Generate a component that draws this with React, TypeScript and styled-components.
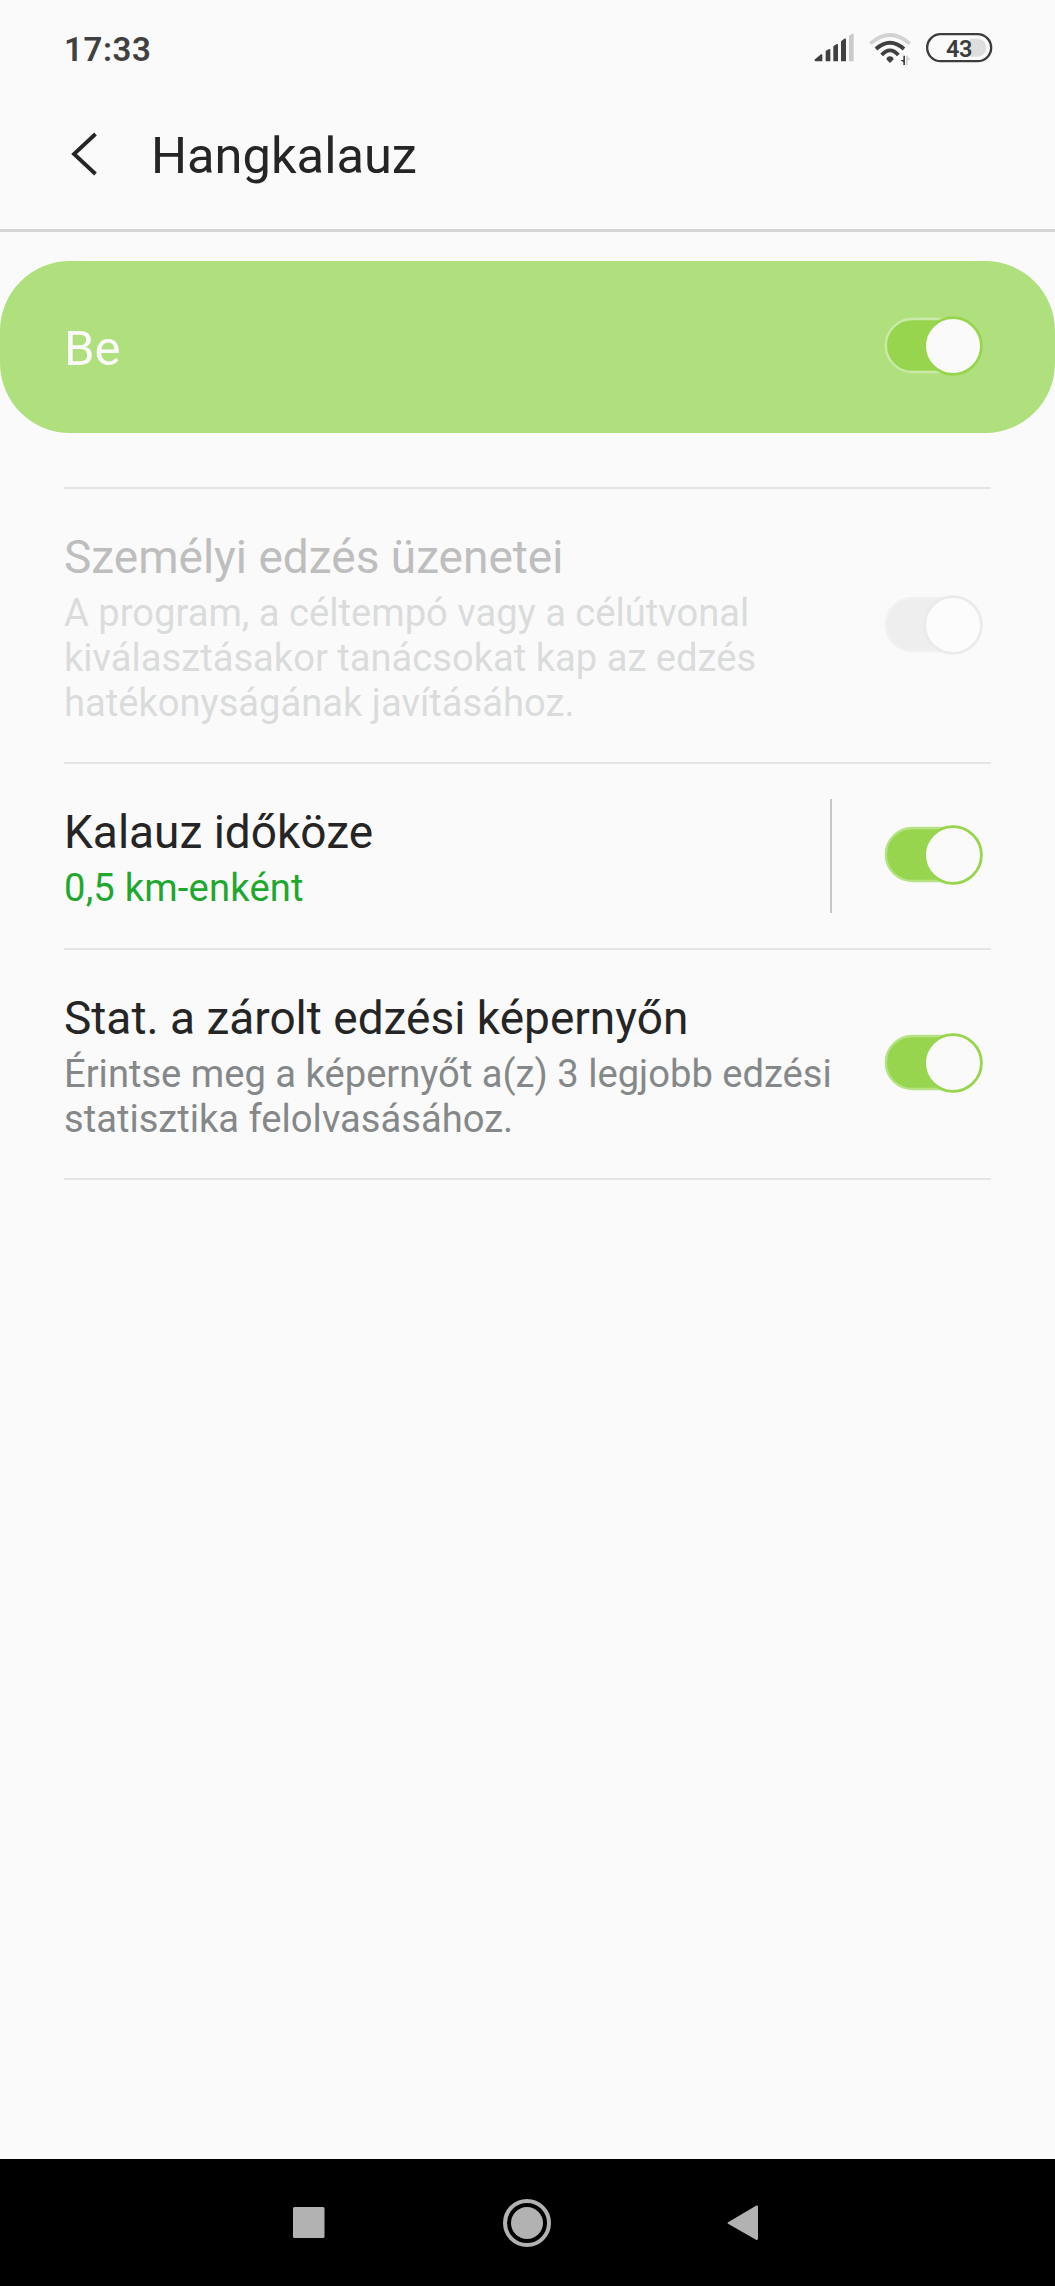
import React from "react";
import styled, { createGlobalStyle } from "styled-components";

const GlobalStyle = createGlobalStyle`
  body {
    margin: 0;
    background: #fafafa;
    font-family: Roboto, "Noto Sans", sans-serif;
    color: #252525;
  }
  * { box-sizing: border-box; }
`;

const Screen = styled.div`
  display: flex;
  flex-direction: column;
  width: 1055px;
  height: 2286px;
  overflow: hidden;
  background: #fafafa;
`;

const StatusBar = styled.div`
  display: flex;
  align-items: center;
  justify-content: space-between;
  height: 100px;
  padding: 0 62px 0 64px;
`;

const Clock = styled.div`
  font-size: 33px;
  font-weight: 600;
  line-height: 40px;
  letter-spacing: 0.6px;
  color: #404040;
`;

const StatusIcons = styled.svg`
  display: block;
  width: 220px;
  height: 80px;
  margin-right: -17px;
`;

const BatteryText = styled.text`
  font-family: Roboto, sans-serif;
  font-size: 23.5px;
  font-weight: 600;
  letter-spacing: -0.4px;
  fill: #3c3c3c;
`;

const Header = styled.header`
  display: flex;
  align-items: center;
  height: 132px;
  padding: 0 0 18px 70px;
  border-bottom: 3px solid #d4d4d4;
`;

const BackIcon = styled.svg`
  width: 30px;
  height: 46px;
  margin: 0 51px 4px 0;
`;

const Title = styled.h1`
  margin: 0;
  font-size: 50.6px;
  font-weight: 400;
  line-height: 60px;
`;

const MasterSwitch = styled.div`
  display: flex;
  align-items: center;
  justify-content: space-between;
  height: 172px;
  margin-top: 29px;
  padding: 0 72px 0 64px;
  border-radius: 70px;
  background: #b0df7d;
`;

const MasterLabel = styled.div`
  padding-top: 4px;
  font-size: 49px;
  line-height: 58px;
  color: #fafafa;
`;

const List = styled.main`
  flex: 1;
  margin: 54px 64px 0;
  border-top: 2px solid #e4e4e4;
`;

const Row = styled.section<{ $height: number }>`
  display: flex;
  align-items: center;
  height: ${(p) => p.$height}px;
  padding-right: 8px;
  border-bottom: 2px solid #e4e4e4;
`;

const RowText = styled.div`
  flex: 1;
  align-self: flex-start;
  padding-top: 41px;
  white-space: nowrap;
`;

const RowTitle = styled.div<{ $disabled?: boolean }>`
  font-size: 46px;
  line-height: 54px;
  color: ${(p) => (p.$disabled ? "#bebebe" : "#252525")};
`;

const RowDetail = styled.div<{ $color: string; $tracking?: number }>`
  margin-top: 7px;
  font-size: 38.15px;
  line-height: 45px;
  letter-spacing: ${(p) => p.$tracking ?? 0}px;
  color: ${(p) => p.$color};
`;

const Separator = styled.div`
  width: 2px;
  height: 114px;
  margin-right: 51px;
  background: #c6c6c6;
`;

const SwitchIcon = styled.svg`
  flex: none;
  width: 100px;
  height: 62px;
`;

const NavBar = styled.nav`
  display: flex;
  flex: none;
  height: 127px;
  background: #000;
`;

const NavIcons = styled.svg`
  width: 1055px;
  height: 127px;
`;

function Switch({ track, edge, ring, thumb = "#fafafa" }: { track: string; edge: string; ring: string; thumb?: string }) {
  return (
    <SwitchIcon viewBox="0 0 100 62">
      <rect x="2.8" y="3" width="90" height="53" rx="26.5" fill={track} stroke={edge} strokeWidth="2.4" />
      <circle cx="70" cy="30" r="28.4" fill={thumb} stroke={ring} strokeWidth="2.8" />
    </SwitchIcon>
  );
}

export default function App() {
  return (
    <>
      <GlobalStyle />
      <Screen>
        <StatusBar>
          <Clock>17:33</Clock>
          <StatusIcons viewBox="0 0 660 240">
            <g fill="#404040">
              <path d="M75 148L93 133Q97 131 97 136V154H78Q72 154 75 148Z" />
              <path d="M107 123L117 117Q121 116 121 120V154H107Z" />
              <path d="M130 109L140 102Q144 101 144 105V154H130Z" />
              <path d="M153 94L163 86Q168 84 168 89V154H153Z" />
            </g>
            <path d="M177 78L186 71Q191 69 191 74V154H177Z" fill="#cacaca" />
            <g fill="none" strokeWidth="11.5">
              <path d="M241 101Q300 49 359 101" stroke="#d2d2d2" />
              <path d="M258 117Q300 80 342 117" stroke="#404040" />
              <path d="M275 135Q300 107 325 135" stroke="#404040" />
            </g>
            <path d="M289 148Q291 139 300 139Q309 139 311 148L300 159Z" fill="#404040" />
            <path d="M340 137H345V165H340V157L331 150H340Z" fill="#404040" />
            <path d="M348 137H353V141L362 149H353V165H348Z" fill="#d2d2d2" />
            <path d="M540 86H562A27 27 0 0 1 562 140H540Z" fill="#dedede" />
            <rect x="411.5" y="72.5" width="192" height="81" rx="40.5" fill="none" stroke="#3c3c3c" strokeWidth="7" />
            <g transform="scale(3)">
              <BatteryText x="156" y="46.6">43</BatteryText>
            </g>
          </StatusIcons>
        </StatusBar>
        <Header>
          <BackIcon viewBox="0 0 30 46">
            <path d="M25.5 3L4 23L25.5 43" fill="none" stroke="#252525" strokeWidth="3.8" />
          </BackIcon>
          <Title>Hangkalauz</Title>
        </Header>
        <MasterSwitch>
          <MasterLabel>Be</MasterLabel>
          <Switch track="#97d54e" edge="#caeaa7" ring="#97d54e" />
        </MasterSwitch>
        <List>
          <Row $height={275}>
            <RowText>
              <RowTitle $disabled>Személyi edzés üzenetei</RowTitle>
              <RowDetail $color="#dadcdc">
                A program, a céltempó vagy a célútvonal<br />
                kiválasztásakor tanácsokat kap az edzés<br />
                hatékonyságának javításához.
              </RowDetail>
            </RowText>
            <Switch track="#eeeeee" edge="#f1f1f1" ring="#ebebeb" thumb="#fcfcfc" />
          </Row>
          <Row $height={186}>
            <RowText>
              <RowTitle>Kalauz időköze</RowTitle>
              <RowDetail $color="#1fa82e" $tracking={0.2}>0,5 km-enként</RowDetail>
            </RowText>
            <Separator />
            <Switch track="#97d54e" edge="#b7e285" ring="#97d54e" />
          </Row>
          <Row $height={230}>
            <RowText>
              <RowTitle>Stat. a zárolt edzési képernyőn</RowTitle>
              <RowDetail $color="#858889">
                Érintse meg a képernyőt a(z) 3 legjobb edzési<br />
                statisztika felolvasásához.
              </RowDetail>
            </RowText>
            <Switch track="#97d54e" edge="#b7e285" ring="#97d54e" />
          </Row>
        </List>
        <NavBar>
          <NavIcons viewBox="0 0 1055 127">
            <g fill="#b2b2b2">
              <rect x="293" y="48" width="31.5" height="31" rx="1.5" />
              <circle cx="527" cy="64" r="16" />
              <circle cx="527" cy="64" r="22" fill="none" stroke="#b2b2b2" strokeWidth="4" />
              <path d="M728.5 63L756 46.8Q758 46 758 48V79.5Q758 81.5 756 80.7L728.5 65Q726.5 64 728.5 63Z" />
            </g>
          </NavIcons>
        </NavBar>
      </Screen>
    </>
  );
}
